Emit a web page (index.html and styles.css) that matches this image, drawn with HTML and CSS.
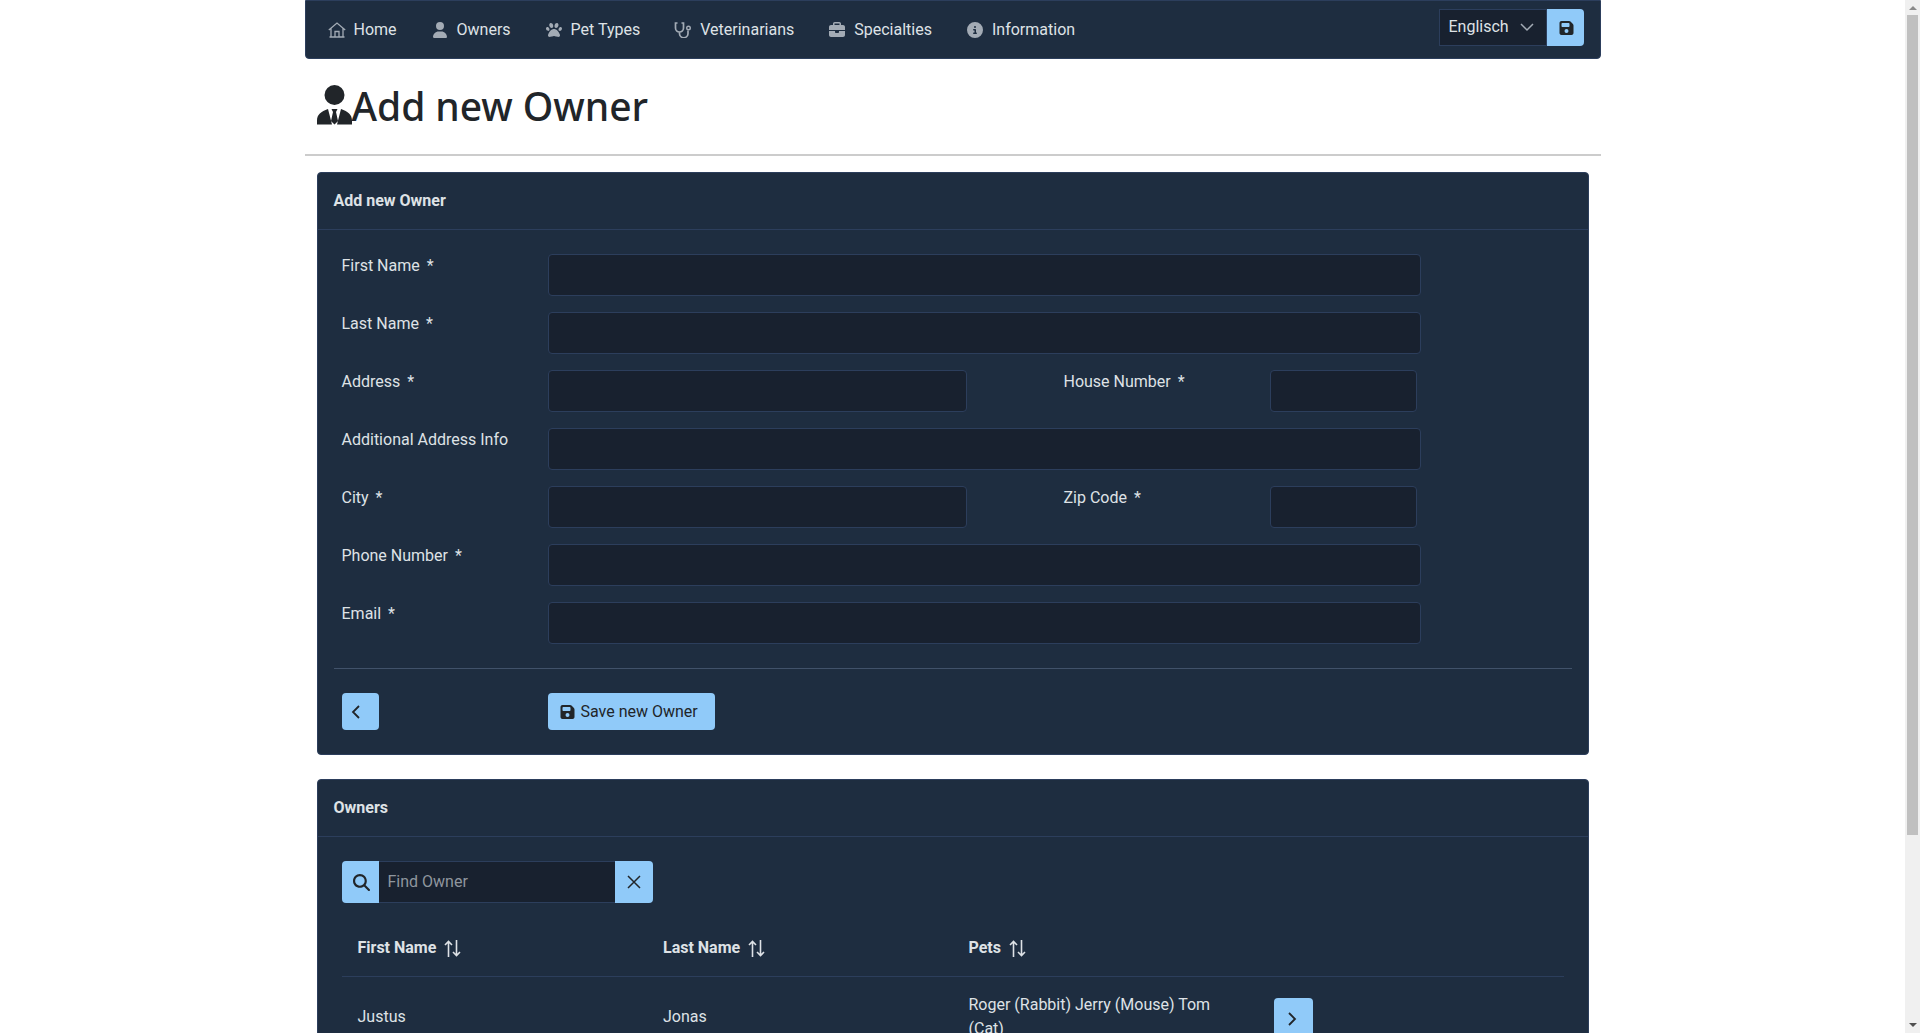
FILE: index.html
```html
<!DOCTYPE html>
<html lang="en">
<head>
    <meta charset="UTF-8">
    <meta name="viewport" content="width=device-width, initial-scale=1.0">
    <title>Add new Owner</title>
    <link rel="stylesheet" href="styles.css">
</head>
<body>
    <div class="container">
        <nav class="navbar">
            <ul class="nav-links">
                <li><a href="#" class="nav-link">
                    <svg class="nav-icon" viewBox="0 0 18 16"><path d="M.8 8 9 1l8.200 7M3 6.500V15h12V6.500M7 15V9.500h4V15M1.500 15h15" fill="none" stroke="currentColor" stroke-width="1.300"/></svg>
                    Home</a></li>
                <li><a href="#" class="nav-link">
                    <svg class="nav-icon" viewBox="0 0 448 512"><path fill="currentColor" d="M224 256A128 128 0 1 0 224 0a128 128 0 1 0 0 256zm-45.700 48C79.800 304 0 383.800 0 482.300C0 498.700 13.300 512 29.700 512H418.300c16.400 0 29.700-13.300 29.700-29.700C448 383.800 368.200 304 269.700 304H178.300z"/></svg>
                    Owners</a></li>
                <li><a href="#" class="nav-link">
                    <svg class="nav-icon" viewBox="0 0 512 512"><path fill="currentColor" d="M226.500 92.900c14.300 42.900-.3 86.200-32.600 96.800s-70.100-15.600-84.400-58.500s.3-86.200 32.600-96.800s70.100 15.600 84.400 58.500zM100.400 198.600c18.900 32.400 14.300 70.100-10.200 84.100s-59.700-.9-78.500-33.300S-2.700 179.300 21.800 165.300s59.700 .9 78.500 33.300zM69.200 401.200C121.600 259.900 214.700 224 256 224s134.400 35.900 186.800 177.200c3.600 9.700 5.200 20.100 5.200 30.500v1.600c0 25.800-20.900 46.700-46.700 46.700c-11.500 0-22.900-1.400-34-4.200l-88-22c-15.300-3.800-31.300-3.800-46.600 0l-88 22c-11.100 2.800-22.500 4.200-34 4.200C84.900 480 64 459.100 64 433.300v-1.600c0-10.400 1.600-20.800 5.200-30.500zM421.800 282.700c-24.500-14-29.100-51.700-10.200-84.100s54-47.300 78.500-33.300s29.100 51.700 10.200 84.100s-54 47.300-78.500 33.300zM310.100 189.700c-32.300-10.600-46.900-53.900-32.600-96.800s52.100-69.100 84.400-58.500s46.900 53.900 32.600 96.800s-52.100 69.100-84.400 58.500z"/></svg>
                    Pet Types</a></li>
                <li><a href="#" class="nav-link">
                    <svg class="nav-icon" viewBox="0 0 18 16"><path d="M3.500 1H1.500v5a4 4 0 0 0 8 0V1h-2M5.500 10v1.500a4 4 0 0 0 8.500 0V8.500" fill="none" stroke="currentColor" stroke-width="1.700"/><circle cx="14.500" cy="6" r="1.800" fill="none" stroke="currentColor" stroke-width="1.400"/></svg>
                    Veterinarians</a></li>
                <li><a href="#" class="nav-link">
                    <svg class="nav-icon" viewBox="0 0 512 512"><path fill="currentColor" d="M184 48H328c4.400 0 8 3.600 8 8V96H176V56c0-4.400 3.600-8 8-8zm-56 8V96H64C28.700 96 0 124.700 0 160v96H192 320 512V160c0-35.300-28.700-64-64-64H384V56c0-30.900-25.100-56-56-56H184c-30.900 0-56 25.100-56 56zM512 288H320v32c0 17.700-14.300 32-32 32H224c-17.700 0-32-14.300-32-32V288H0V416c0 35.300 28.700 64 64 64H448c35.300 0 64-28.700 64-64V288z"/></svg>
                    Specialties</a></li>
                <li><a href="#" class="nav-link">
                    <svg class="nav-icon" viewBox="0 0 512 512"><path fill="currentColor" d="M256 512A256 256 0 1 0 256 0a256 256 0 1 0 0 512zM216 336h24V272H216c-13.300 0-24-10.700-24-24s10.700-24 24-24h48c13.300 0 24 10.700 24 24v88h8c13.300 0 24 10.700 24 24s-10.700 24-24 24H216c-13.300 0-24-10.700-24-24s10.700-24 24-24zm40-208a32 32 0 1 1 0 64 32 32 0 1 1 0-64z"/></svg>
                    Information</a></li>
            </ul>
            <div class="lang-group">
                <div class="lang-select">
                    <span>Englisch</span>
                    <svg class="lang-chevron" viewBox="0 0 16 16"><path d="M2 5l6 6 6-6" fill="none" stroke="currentColor" stroke-width="1.500"/></svg>
                </div>
                <button type="button" class="btn btn-addon">
                    <svg class="btn-icon" viewBox="0 0 448 512"><path fill="currentColor" d="M64 32C28.700 32 0 60.700 0 96V416c0 35.300 28.700 64 64 64H384c35.300 0 64-28.700 64-64V173.300c0-17-6.700-33.300-18.700-45.300L352 50.700C340 38.700 323.700 32 306.700 32H64zm0 96c0-17.700 14.300-32 32-32H288c17.700 0 32 14.300 32 32v64c0 17.700-14.300 32-32 32H96c-17.700 0-32-14.300-32-32V128zM224 288a64 64 0 1 1 0 128 64 64 0 1 1 0-128z"/></svg>
                </button>
            </div>
        </nav>

        <header class="page-title">
            <svg class="title-icon" viewBox="0 0 35 40">
                <circle cx="17.500" cy="10" r="10" fill="currentColor"/>
                <path fill="currentColor" d="M0 39.500v-4c0-6 4-9 11-11.500l4 15.500zM35 39.500v-4c0-6-4-9-11-11.500l-4 15.500zM14.500 24h6l-1.500 3 2 9-3.500 3.500L14 36l2-9z"/>
            </svg>
            <h1>Add new Owner</h1>
        </header>

        <section class="card">
            <div class="card-header">Add new Owner</div>
            <form class="card-body" onsubmit="return false">
                <div class="form-row">
                    <label class="field-label" for="firstName">First Name <span class="req">*</span></label>
                    <input class="field field-wide" type="text" id="firstName">
                </div>
                <div class="form-row">
                    <label class="field-label" for="lastName">Last Name <span class="req">*</span></label>
                    <input class="field field-wide" type="text" id="lastName">
                </div>
                <div class="form-row">
                    <label class="field-label" for="address">Address <span class="req">*</span></label>
                    <input class="field field-half" type="text" id="address">
                    <label class="field-label" for="houseNumber">House Number <span class="req">*</span></label>
                    <input class="field field-small" type="text" id="houseNumber">
                </div>
                <div class="form-row">
                    <label class="field-label" for="addressInfo">Additional Address Info</label>
                    <input class="field field-wide" type="text" id="addressInfo">
                </div>
                <div class="form-row">
                    <label class="field-label" for="city">City <span class="req">*</span></label>
                    <input class="field field-half" type="text" id="city">
                    <label class="field-label" for="zipCode">Zip Code <span class="req">*</span></label>
                    <input class="field field-small" type="text" id="zipCode">
                </div>
                <div class="form-row">
                    <label class="field-label" for="phone">Phone Number <span class="req">*</span></label>
                    <input class="field field-wide" type="text" id="phone">
                </div>
                <div class="form-row">
                    <label class="field-label" for="email">Email <span class="req">*</span></label>
                    <input class="field field-wide" type="text" id="email">
                </div>

                <div class="form-actions">
                    <button type="button" class="btn btn-back">
                        <svg class="btn-chevron btn-chevron-left" viewBox="0 0 16 16"><path d="M11 2 5 8l6 6" fill="none" stroke="currentColor" stroke-width="1.800"/></svg>
                    </button>
                    <button type="submit" class="btn btn-save">
                        <svg class="btn-icon" viewBox="0 0 448 512"><path fill="currentColor" d="M64 32C28.700 32 0 60.700 0 96V416c0 35.300 28.700 64 64 64H384c35.300 0 64-28.700 64-64V173.300c0-17-6.700-33.300-18.700-45.300L352 50.700C340 38.700 323.700 32 306.700 32H64zm0 96c0-17.700 14.300-32 32-32H288c17.700 0 32 14.300 32 32v64c0 17.700-14.300 32-32 32H96c-17.700 0-32-14.300-32-32V128zM224 288a64 64 0 1 1 0 128 64 64 0 1 1 0-128z"/></svg>
                        Save new Owner
                    </button>
                </div>
            </form>
        </section>

        <section class="card">
            <div class="card-header">Owners</div>
            <div class="card-body owners-body">
                <div class="search-group">
                    <span class="search-addon">
                        <svg class="search-icon" viewBox="0 0 512 512"><path fill="currentColor" d="M416 208c0 45.900-14.900 88.300-40 122.700L502.600 457.400c12.500 12.500 12.500 32.800 0 45.300s-32.800 12.500-45.300 0L330.700 376c-34.400 25.200-76.800 40-122.700 40C93.100 416 0 322.900 0 208S93.100 0 208 0S416 93.100 416 208zM208 352a144 144 0 1 0 0-288 144 144 0 1 0 0 288z"/></svg>
                    </span>
                    <input class="search-input" type="text" placeholder="Find Owner">
                    <span class="search-addon search-clear">
                        <svg class="btn-chevron" viewBox="0 0 16 16"><path d="M2 2l12 12M14 2 2 14" fill="none" stroke="currentColor" stroke-width="1.500"/></svg>
                    </span>
                </div>
                <table class="owners-table">
                    <thead>
                        <tr>
                            <th>First Name <svg class="sort-icon" viewBox="0 0 17 17"><path d="M4.500 17V1.500M1 5l3.500-3.500L8 5M12.500 0v15.500M9 12l3.500 3.500L16 12" fill="none" stroke="currentColor" stroke-width="1.600"/></svg></th>
                            <th>Last Name <svg class="sort-icon" viewBox="0 0 17 17"><path d="M4.500 17V1.500M1 5l3.500-3.500L8 5M12.500 0v15.500M9 12l3.500 3.500L16 12" fill="none" stroke="currentColor" stroke-width="1.600"/></svg></th>
                            <th>Pets <svg class="sort-icon" viewBox="0 0 17 17"><path d="M4.500 17V1.500M1 5l3.500-3.500L8 5M12.500 0v15.500M9 12l3.500 3.500L16 12" fill="none" stroke="currentColor" stroke-width="1.600"/></svg></th>
                            <th></th>
                        </tr>
                    </thead>
                    <tbody>
                        <tr>
                            <td>Justus</td>
                            <td>Jonas</td>
                            <td>Roger (Rabbit) Jerry (Mouse) Tom (Cat)</td>
                            <td>
                                <button type="button" class="btn btn-back btn-row">
                                    <svg class="btn-chevron" viewBox="0 0 16 16"><path d="M5 2l6 6-6 6" fill="none" stroke="currentColor" stroke-width="1.800"/></svg>
                                </button>
                            </td>
                        </tr>
                    </tbody>
                </table>
            </div>
        </section>
    </div>

    <div class="scrollbar">
        <span class="scroll-arrow scroll-arrow-up"></span>
        <span class="scroll-thumb"></span>
        <span class="scroll-arrow scroll-arrow-down"></span>
    </div>
</body>
</html>
```

FILE: styles.css
```css
* {
    box-sizing: border-box;
}

body {
    margin: 0;
    padding-right: 15px;
    background: #ffffff;
    color: #dee2e6;
    font-family: Roboto, "Liberation Sans", sans-serif;
    font-size: 16px;
    line-height: 24px;
}

.container {
    width: 1296px;
    margin: 0 auto;
}

/* top bar */
.navbar {
    display: flex;
    justify-content: space-between;
    align-items: center;
    height: 59px;
    padding: 0 16px 0 5px;
    background: #1e2d40;
    border: 1px solid #2c3e5c;
    border-radius: 0 0 4px 4px;
}

.nav-links {
    display: flex;
    margin: 0;
    padding: 0;
    list-style: none;
}

.nav-link {
    display: flex;
    align-items: center;
    gap: 8px;
    padding: 0 17px;
    color: #dee2e6;
    text-decoration: none;
}

.nav-icon {
    width: 18px;
    height: 16px;
    color: #a3abb5;
}

.lang-group {
    display: flex;
    height: 37px;
    margin-bottom: 4px;
}

.lang-select {
    display: flex;
    align-items: center;
    justify-content: space-between;
    width: 108px;
    padding: 0 11px 1px 9px;
    background: #18212f;
    border: 1px solid #2c3e5c;
}

.lang-chevron {
    width: 16px;
    height: 16px;
    color: #a3abb5;
}

.btn {
    display: inline-flex;
    align-items: center;
    justify-content: center;
    border: none;
    border-radius: 4px;
    background: #90caf9;
    color: #212529;
    font: inherit;
    cursor: pointer;
}

.btn-addon {
    width: 37px;
    padding: 0 0 0 2px;
    border-radius: 0 4px 4px 0;
}

.btn-icon {
    width: 15px;
    height: 16px;
}

.btn-chevron {
    width: 16px;
    height: 16px;
}

.btn-chevron-left {
    margin-right: 8px;
}

/* title */
.page-title {
    display: flex;
    align-items: flex-end;
    height: 97px;
    margin-bottom: 16px;
    padding: 0 0 29px 12px;
    border-bottom: 2px solid #cccccc;
    color: #212529;
}

.title-icon {
    width: 35px;
    height: 40px;
}

.page-title h1 {
    margin: 0 0 -5px;
    font-family: "Noto Sans", sans-serif;
    font-size: 39px;
    font-weight: 500;
    line-height: 48px;
    letter-spacing: -0.05px;
}

/* cards */
.card {
    margin: 0 12px 24px;
    background: #1e2d40;
    border: 1px solid #2c3e5c;
    border-radius: 4px;
}

.card-header {
    height: 57px;
    padding: 16px;
    border-bottom: 1px solid #2c3e5c;
    font-weight: 700;
}

.card-body {
    padding: 24px 16px;
}

.form-row {
    display: flex;
    margin-bottom: 16px;
    padding-left: 8px;
}

.field-label {
    flex: none;
    width: 206px;
    line-height: 24px;
}

.req {
    margin-left: 3px;
}

.field {
    height: 42px;
    background: #18212f;
    border: 1px solid #2c3e5c;
    border-radius: 4px;
    color: #dee2e6;
    font: inherit;
}

.field-wide {
    width: 873px;
}

.field-half {
    width: 419px;
    margin-right: 97px;
}

.field-small {
    width: 147px;
}

.form-actions {
    display: flex;
    gap: 169px;
    margin-top: 24px;
    padding: 24px 8px 0;
    border-top: 1px solid #41526a;
}

.btn-back {
    width: 37px;
    height: 37px;
}

.btn-save {
    justify-content: flex-start;
    gap: 6px;
    width: 167px;
    height: 37px;
    padding-left: 12px;
}

/* owners list */
.owners-body {
    min-height: 460px;
    padding: 24px 24px 16px;
}

.search-group {
    display: flex;
    width: 311px;
    height: 42px;
}

.search-addon {
    display: flex;
    flex: none;
    align-items: center;
    justify-content: center;
    width: 37px;
    padding-left: 2px;
    background: #90caf9;
    border-radius: 4px 0 0 4px;
    color: #212529;
}

.search-clear {
    width: 38px;
    padding-left: 0;
    border-radius: 0 4px 4px 0;
}

.search-icon {
    width: 17px;
    height: 17px;
}

.search-input {
    flex: 1;
    min-width: 0;
    padding: 0 9px;
    background: #18212f;
    border: 1px solid #2c3e5c;
    border-width: 1px 0;
    color: #dee2e6;
    font: inherit;
}

.search-input::placeholder {
    color: #8f969e;
}

.owners-table {
    width: 100%;
    margin-top: 17px;
    border-collapse: collapse;
    table-layout: fixed;
}

.owners-table th,
.owners-table td {
    padding: 16px;
    text-align: left;
    vertical-align: middle;
}

.owners-table th {
    border-bottom: 1px solid #2c3e5c;
    font-weight: 700;
}

.sort-icon {
    width: 17px;
    height: 17px;
    margin-left: 4px;
    vertical-align: -4px;
}

.btn-row {
    display: flex;
    width: 39px;
    height: 42px;
    margin-top: 4px;
    padding: 0 4px 0 0;
}

/* the window's own scrollbar, as the browser drew it */
.scrollbar {
    position: fixed;
    top: 0;
    right: 0;
    bottom: 0;
    display: flex;
    flex-direction: column;
    align-items: center;
    width: 15px;
    background: #f0f0f0;
}

.scroll-arrow {
    flex: none;
    width: 0;
    height: 0;
    border-left: 4px solid transparent;
    border-right: 4px solid transparent;
}

.scroll-arrow-up {
    margin-top: 6px;
    border-bottom: 4px solid #8a8a8a;
}

.scroll-arrow-down {
    margin-top: auto;
    margin-bottom: 6px;
    border-top: 4px solid #505050;
}

.scroll-thumb {
    flex: none;
    width: 11px;
    height: 820px;
    margin-top: 5px;
    background: #c0c0c0;
}
```
